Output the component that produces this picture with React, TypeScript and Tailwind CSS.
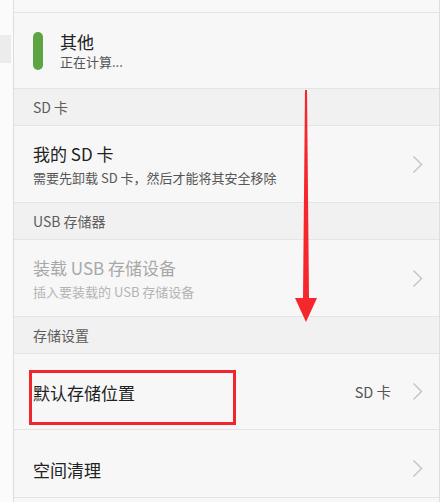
import React from 'react'

const FONT = { fontFamily: '"Noto Sans CJK SC", Roboto, "Noto Sans", sans-serif' }

function Chevron() {
  return (
    <svg width="11" height="19" viewBox="0 0 11 19" className="shrink-0">
      <polyline points="1.5,1.5 9.5,9.5 1.5,17.5" fill="none" stroke="#c2c2c2" strokeWidth="1.4" />
    </svg>
  )
}

function Header({ label, h }: { label: string; h: string }) {
  return (
    <div className={`flex items-center border-b border-[#e4e4e4] bg-[#f1f1f1] pl-[19px] text-[14px] text-[#5c5c5c] ${h}`}>
      {label}
    </div>
  )
}

interface RowProps {
  title: string
  sub?: string
  value?: string
  muted?: boolean
  h: string
  chevron?: boolean
}

function Row({ title, sub, value, muted, h, chevron = true }: RowProps) {
  return (
    <div className={`flex items-center border-b border-[#e4e4e4] pl-[19px] pr-[16px] ${h}`}>
      <div className="flex min-w-0 flex-1 flex-col gap-[4px] pt-[2px]">
        <span className={`text-[17px] leading-[22px] ${muted ? 'text-[#a8a8a8]' : 'text-[#222]'}`}>{title}</span>
        {sub && <span className={`text-[13px] leading-[18px] ${muted ? 'text-[#b4b4b4]' : 'text-[#555]'}`}>{sub}</span>}
      </div>
      {value && <span className="mr-[21px] text-[14.5px] text-[#555]">{value}</span>}
      {chevron && <Chevron />}
    </div>
  )
}

export default function App() {
  return (
    <div className="relative flex h-[502px] w-[440px] overflow-hidden bg-[#fbfbfb]" style={FONT}>
      {/* left edge of the screen behind */}
      <div className="w-[13px] shrink-0">
        <div className="mt-[35px] h-[28px] w-[11px] bg-[#ececec]" />
      </div>

      <div className="flex flex-1 flex-col border-x border-[#dedede] bg-[#f7f7f7]">
        <div className="h-[13px] shrink-0 border-b border-[#e4e4e4] bg-[#f8f8f8]" />

        <div className="flex h-[76px] shrink-0 items-center border-b border-[#e4e4e4] pl-[19px]">
          <div className="h-[38px] w-[10px] rounded-full bg-[#5da445]" />
          <div className="ml-[17px] flex flex-col">
            <span className="text-[17px] leading-[22px] text-[#222]">其他</span>
            <span className="text-[13px] leading-[18px] text-[#555]">正在计算...</span>
          </div>
        </div>

        <Header label="SD 卡" h="h-[37px] shrink-0" />
        <Row title="我的 SD 卡" sub="需要先卸载 SD 卡，然后才能将其安全移除" h="h-[77px] shrink-0" />
        <Header label="USB 存储器" h="h-[37px] shrink-0" />
        <Row title="装载 USB 存储设备" sub="插入要装载的 USB 存储设备" muted h="h-[77px] shrink-0" />
        <Header label="存储设置" h="h-[37px] shrink-0" />
        <Row title="默认存储位置" value="SD 卡" h="h-[76px] shrink-0" />
        <Row title="空间清理" h="h-[68px] shrink-0 pt-[10px]" />
      </div>

      {/* annotation: red highlight box */}
      <div className="absolute left-[29px] top-[370px] h-[55px] w-[207px] border-[3px] border-[#f1262c]" />

      {/* annotation: red arrow */}
      <svg className="absolute left-[290px] top-[86px]" width="32" height="240" viewBox="0 0 32 240">
        <polygon points="15,4 17,4 19,213 13,213" fill="#f5262c" />
        <polygon points="5,212 27,212 16,236" fill="#f5262c" />
      </svg>
    </div>
  )
}
